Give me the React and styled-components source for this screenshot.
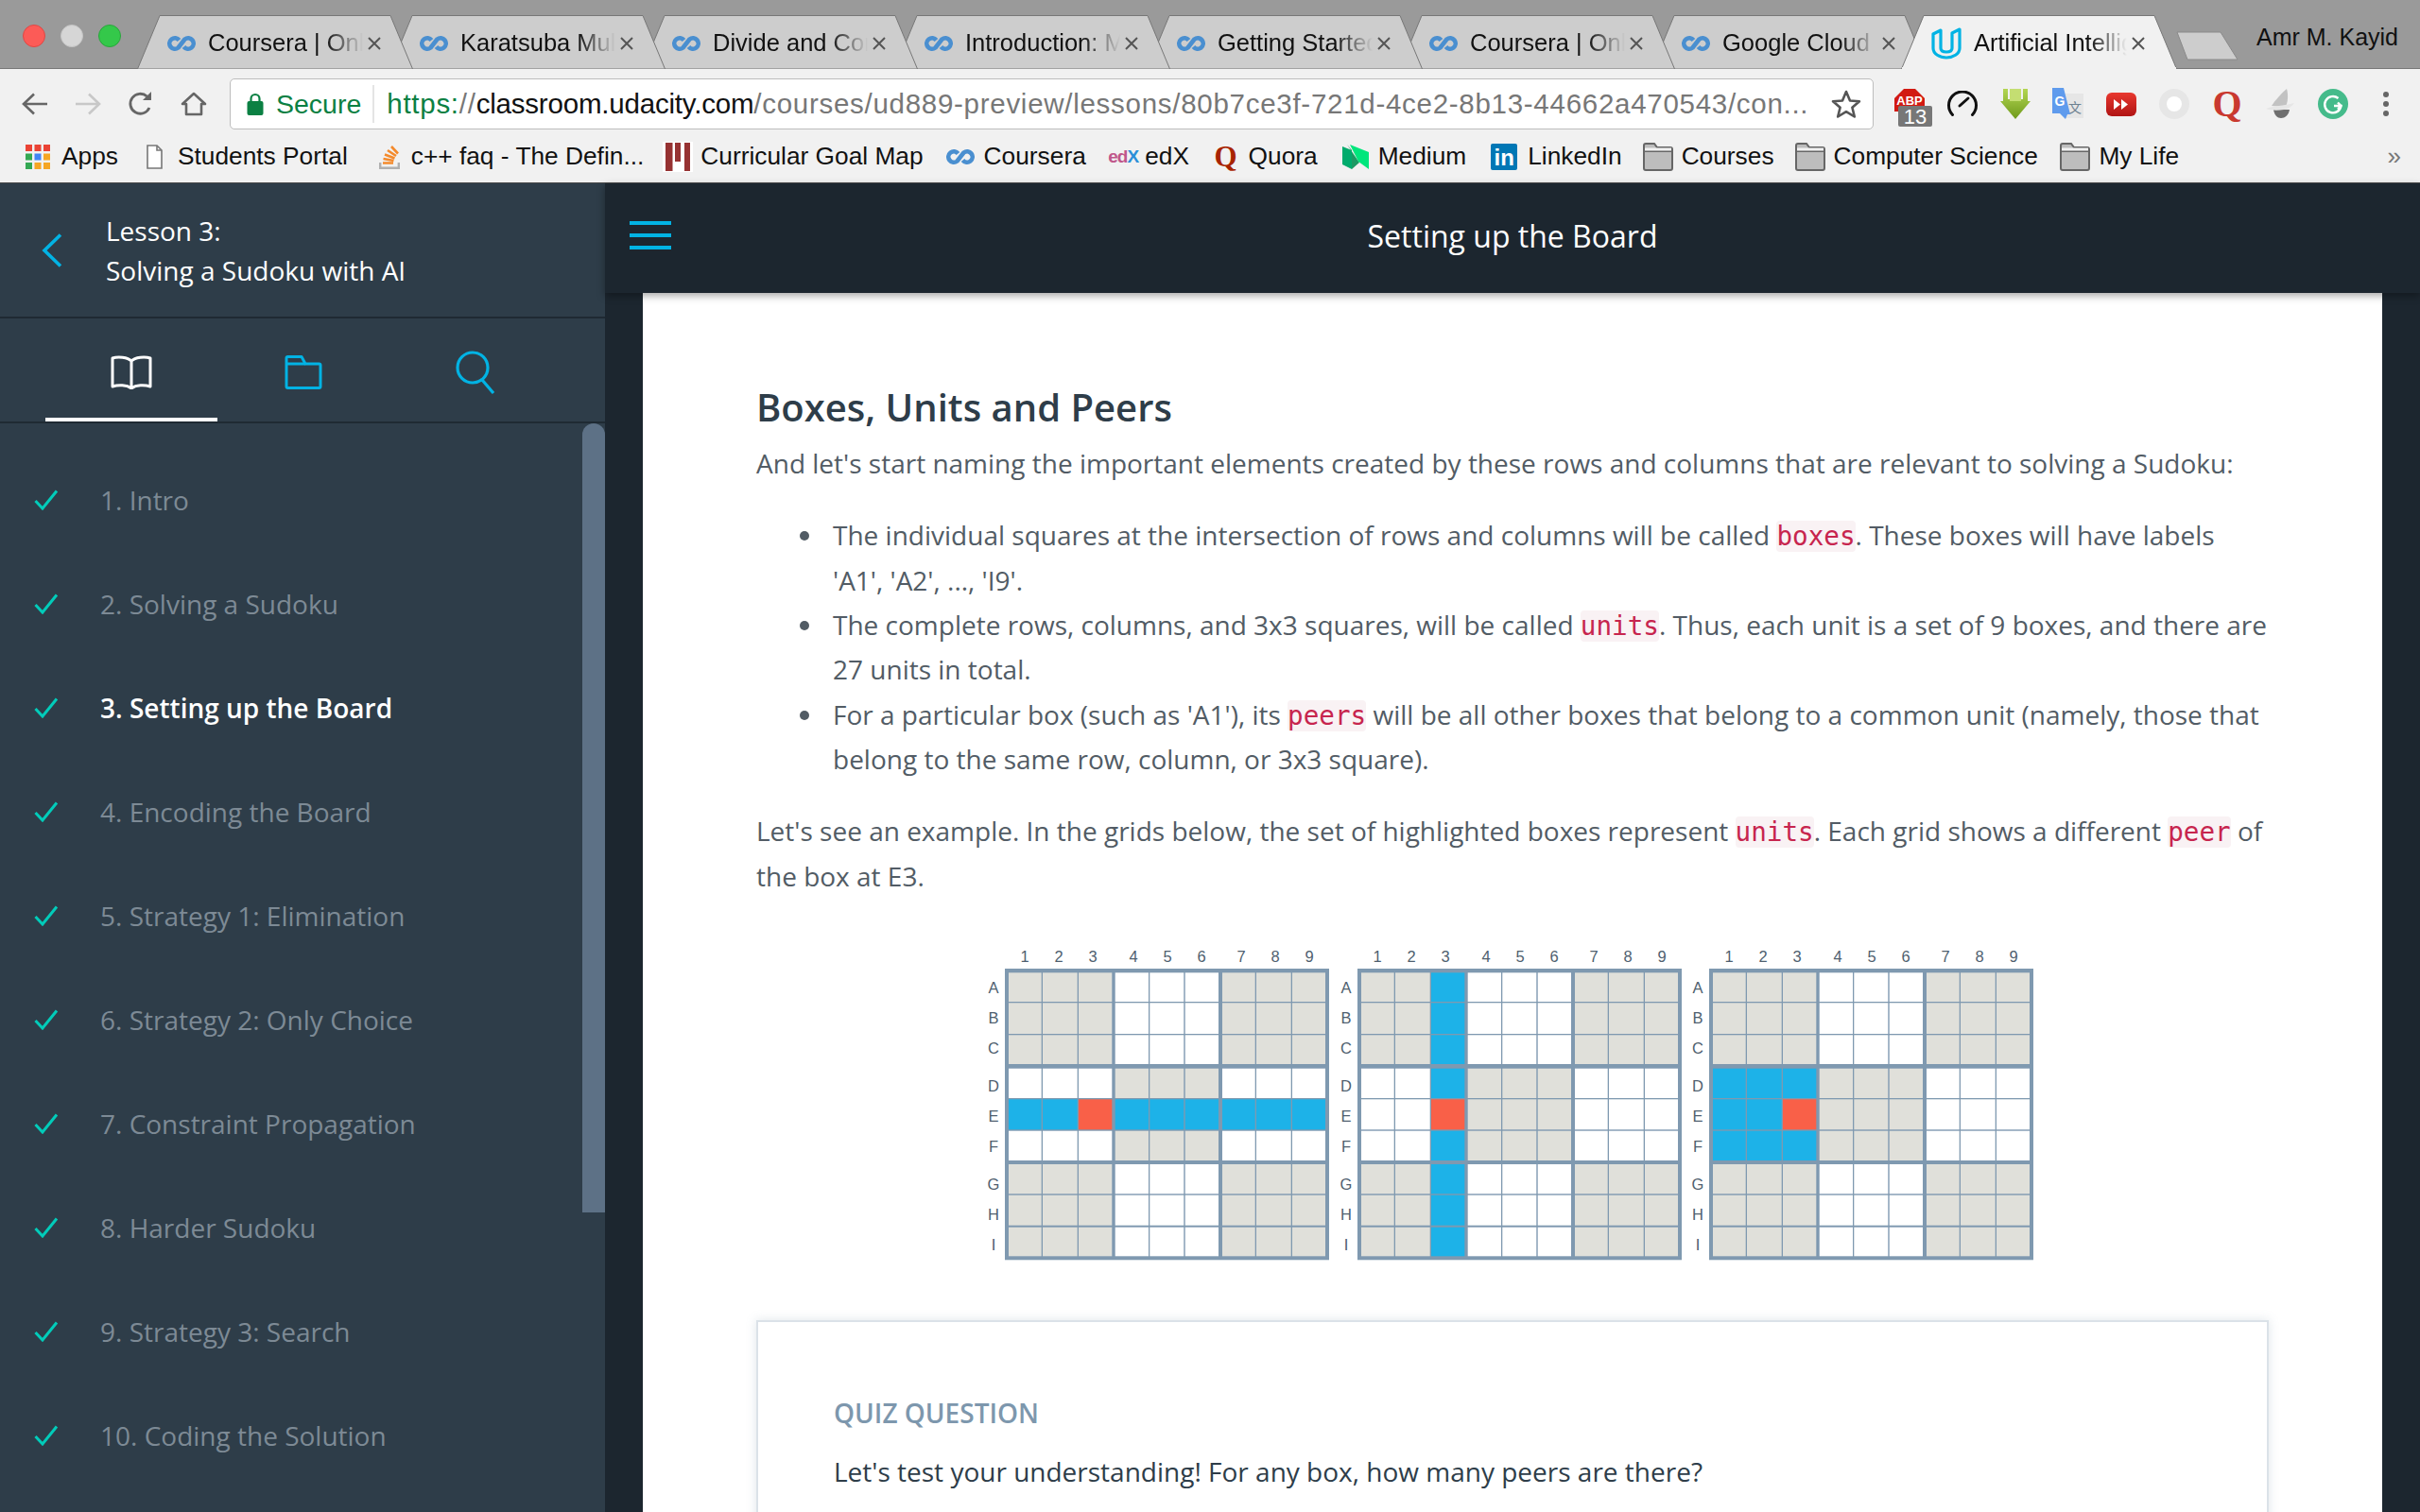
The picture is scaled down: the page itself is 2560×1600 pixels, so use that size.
import React from 'react'
import styled, { createGlobalStyle } from 'styled-components'

const GlobalStyle = createGlobalStyle`
  html, body {
    margin: 0;
    padding: 0;
    width: 2560px;
    height: 1600px;
    overflow: hidden;
    background: #1c262f;
  }
  * { box-sizing: border-box; }
`

const UI_FONT = '"Liberation Sans", Arial, sans-serif'
const PAGE_FONT = '"Open Sans", "Noto Sans", sans-serif'

const Page = styled.div`
  width: 2560px;
  height: 1600px;
  display: flex;
  flex-direction: column;
  overflow: hidden;
  font-family: ${PAGE_FONT};
`

/* browser chrome */

const TabStrip = styled.div`
  height: 73px;
  flex: none;
  display: flex;
  align-items: flex-end;
  padding-left: 24px;
  background: #9a9a9a;
  border-bottom: 1px solid #777;
  font-family: ${UI_FONT};
`

const Lights = styled.div`
  display: flex;
  gap: 16px;
  align-self: flex-start;
  margin: 26px 17px 0 0;
`

const Light = styled.span`
  width: 24px;
  height: 24px;
  border-radius: 50%;
  background: ${p => p.color};
  border: 1px solid ${p => p.edge};
`

const TabRow = styled.div`
  display: flex;
  height: 57px;
  margin-bottom: -1px;
`

const TabItem = styled.div`
  position: relative;
  z-index: ${p => p.$order};
  width: 292px;
  height: 57px;
  margin-right: -25px;
  margin-left: ${p => (p.$active ? -3 : 0)}px;
  padding: 2px 32px 0 32px;
  display: flex;
  align-items: center;
  gap: 13px;
  font-size: 25.5px;
  color: #111;
`

const TabShape = styled.svg`
  position: absolute;
  left: 0;
  top: 0;
  z-index: -1;
`

const TabTitle = styled.span`
  flex: 1;
  min-width: 0;
  overflow: hidden;
  white-space: nowrap;
  -webkit-mask-image: linear-gradient(to right, #000 76%, transparent 100%);
  mask-image: linear-gradient(to right, #000 76%, transparent 100%);
`

const TabClose = styled.svg`
  flex: none;
  margin-left: -10px;
`

const NewTab = styled.svg`
  flex: none;
  position: relative;
  z-index: 0;
  align-self: flex-start;
  margin: 33px 0 0 24px;
`

const UserName = styled.div`
  margin-left: auto;
  align-self: flex-start;
  padding: 23px 23px 0 0;
  font-size: 25px;
  line-height: 32px;
  color: #111;
`

const Toolbar = styled.div`
  height: 65px;
  flex: none;
  display: flex;
  align-items: flex-start;
  padding: 10px 0 0 22px;
  background: #f1f1f1;
  font-family: ${UI_FONT};
`

const NavButton = styled.div`
  width: 56px;
  height: 54px;
  display: flex;
  align-items: center;
  padding-left: 1px;
`

const Omnibox = styled.div`
  width: 1739px;
  height: 54px;
  margin-left: -3px;
  display: flex;
  align-items: center;
  background: #fff;
  border: 1px solid #bdbdbd;
  border-radius: 5px;
  padding-left: 17px;
  font-size: 28.5px;
`

const Secure = styled.span`
  color: #0b8043;
  margin-left: 13px;
  padding-right: 12px;
  margin-right: 13px;
  line-height: 40px;
  border-right: 2px solid #e4e4e4;
`

const Url = styled.span`
  flex: 1;
  min-width: 0;
  white-space: nowrap;
  overflow: hidden;
  color: #777;
  font-size: 29.5px;
  letter-spacing: 0.72px;
`

const UrlScheme = styled.span`
  color: #0b8043;
`

const UrlHost = styled.span`
  color: #111;
  letter-spacing: -0.2px;
`

const Star = styled.svg`
  flex: none;
  margin: 0 12px 0 10px;
`

const Extensions = styled.div`
  display: flex;
  margin-left: 10px;
`

const Extension = styled.div`
  position: relative;
  width: 56px;
  height: 54px;
  display: flex;
  align-items: center;
  justify-content: center;
`

const AbpShield = styled.svg`
  position: absolute;
  left: 12px;
  top: 11px;
`

const AbpCount = styled.span`
  position: absolute;
  left: 16px;
  top: 29px;
  width: 36px;
  height: 22px;
  background: #777;
  color: #fff;
  font-size: 22px;
  line-height: 23px;
  text-align: center;
  border-radius: 2px;
`

const QuoraExt = styled.span`
  color: #c9392f;
  font: bold 40px/1 "Liberation Serif", serif;
`

const Bookmarks = styled.div`
  height: 56px;
  flex: none;
  display: flex;
  align-items: center;
  padding-left: ${p => p.$start}px;
  background: #f1f1f1;
  border-bottom: 1px solid #4a4a4a;
  font-family: ${UI_FONT};
  font-size: 26.3px;
  color: #111;
`

const Bookmark = styled.div`
  display: flex;
  align-items: center;
  gap: ${p => p.$gap}px;
  margin-right: ${p => p.$after}px;
  white-space: nowrap;
`

const Overflow = styled.span`
  margin-left: auto;
  padding-right: 20px;
  color: #777;
  font-size: 26px;
`

const QuoraMark = styled.span`
  color: #a82400;
  font: bold 31px/1 "Liberation Serif", serif;
`

const LinkedInMark = styled.span`
  width: 28px;
  height: 28px;
  border-radius: 2px;
  background: #0077b5;
  color: #fff;
  font: bold 24px/30px "Liberation Sans", sans-serif;
  text-align: center;
`

const EdxMark = styled.span`
  font: bold 19px/1 "Liberation Sans", sans-serif;
  letter-spacing: -1px;
  color: #c0578b;
`

const EdxX = styled.span`
  color: #2a8fd8;
`

/* classroom */

const Classroom = styled.div`
  flex: 1;
  min-height: 0;
  display: flex;
`

const Sidebar = styled.aside`
  width: 640px;
  flex: none;
  display: flex;
  flex-direction: column;
  background: #2e3d49;
`

const SideHeader = styled.div`
  height: 143px;
  flex: none;
  display: flex;
  align-items: center;
  gap: 46px;
  padding: 0 0 0 44px;
  border-bottom: 2px solid #1f2a33;
`

const LessonName = styled.div`
  color: #fff;
  font-size: 28px;
  line-height: 42px;
`

const SideTabs = styled.div`
  height: 111px;
  flex: none;
  display: flex;
  padding-left: 48px;
  border-bottom: 2px solid #1f2a33;
`

const SideTab = styled.div`
  width: 182px;
  display: flex;
  align-items: center;
  justify-content: center;
  padding-top: 9px;
  border-bottom: 4px solid ${p => (p.$active ? '#fff' : 'transparent')};
`

const LessonList = styled.ul`
  position: relative;
  flex: 1;
  list-style: none;
  margin: 0;
  padding: 26px 0 0;
  overflow: hidden;
`

const Scrollbar = styled.div`
  position: absolute;
  right: 0;
  top: 0;
  width: 24px;
  height: 835px;
  border-radius: 12px 12px 0 0;
  background: #5d7186;
`

const LessonItem = styled.li`
  height: 110px;
  display: flex;
  align-items: center;
  gap: 44px;
  padding-left: 36px;
  font-size: 28px;
  font-weight: ${p => (p.$active ? 600 : 400)};
  color: ${p => (p.$active ? '#fff' : '#7d8a95')};
`

const Main = styled.main`
  flex: 1;
  min-width: 0;
  display: flex;
  flex-direction: column;
  background: #1c262f;
`

const TopBar = styled.header`
  position: relative;
  z-index: 2;
  height: 116px;
  flex: none;
  display: flex;
  align-items: center;
  justify-content: center;
  padding-bottom: 6px;
  background: #1c262f;
  box-shadow: 0 3px 8px rgba(0, 0, 0, 0.35);
  color: #fff;
  font-size: 32px;
`

const Hamburger = styled.div`
  position: absolute;
  left: 26px;
  top: 40px;
  width: 44px;
  height: 30px;
  border-top: 4px solid #02b3e4;
  border-bottom: 4px solid #02b3e4;

  &::after {
    content: '';
    display: block;
    margin-top: 9px;
    height: 4px;
    background: #02b3e4;
  }
`

const Article = styled.article`
  flex: 1;
  min-height: 0;
  margin: 0 40px;
  padding: 91px 120px 0;
  background: #fff;
  overflow: hidden;
  color: #525c65;
  font-size: 28px;
  line-height: 47.35px;
`

const Heading = styled.h2`
  margin: 0 0 6px;
  font-size: 40px;
  line-height: 60px;
  font-weight: 600;
  color: #2e3d49;
`

const Para = styled.p`
  margin: 0;
`

const Bullets = styled.ul`
  margin: 29px 0;
  padding-left: 81px;
  list-style: none;
`

const Bullet = styled.li`
  position: relative;

  &::before {
    content: '';
    position: absolute;
    left: -35px;
    top: 19px;
    width: 10px;
    height: 10px;
    border-radius: 50%;
    background: #525c65;
  }
`

const Code = styled.code`
  font-family: "DejaVu Sans Mono", monospace;
  font-size: 27.6px;
  line-height: 1;
  color: #c7254e;
  background: #f9f2f4;
  border-radius: 4px;
`

const Figure = styled.div`
  display: flex;
  justify-content: center;
  margin: 39px 0 57px;
`

const QuizCard = styled.section`
  height: 400px;
  padding: 76px 80px 0;
  background: #fff;
  border: 2px solid #dbe2e8;
  box-shadow: 0 0 10px rgba(125, 151, 173, 0.25);
`

const QuizLabel = styled.div`
  font-size: 28px;
  line-height: 40px;
  font-weight: 600;
  color: #7d97ad;
`

const QuizText = styled.div`
  margin-top: 22px;
  font-size: 28px;
  line-height: 40px;
  color: #2e3d49;
`

/* drawn parts */

const CourseraIcon = () => (
  <svg width="30" height="18" viewBox="0 0 30 18" fill="none" stroke="#4a8fd0" strokeWidth="4.6">
    <path d="M12.5 5.5A5.7 5.7 0 1 0 11.5 13.5L18.5 4.5A5.7 5.7 0 1 1 17.5 12.5" />
  </svg>
)

const UdacityIcon = () => (
  <svg width="32" height="34" viewBox="0 0 32 34" fill="none" stroke="#02b3e4" strokeWidth="3.2" strokeLinejoin="round">
    <path d="M2 7V22C2 28 9 32 16 32S30 28 30 22V2L22 6V22C22 25 19 26 16 26S10 25 10 22V3Z" />
  </svg>
)

const Tab = ({ title, order, active }) => {
  const fill = active ? '#f1f1f1' : '#cdcdcd'
  return (
    <TabItem $order={order} $active={active}>
      <TabShape width="292" height="57" viewBox="0 0 292 57">
        <polygon points="0.5,57 24,0.5 268,0.5 291.5,57" fill={fill} stroke="#777" strokeWidth="1" />
        {active && <rect x="1" y="55" width="290" height="2" fill={fill} />}
      </TabShape>
      {active ? <UdacityIcon /> : <CourseraIcon />}
      <TabTitle>{title}</TabTitle>
      <TabClose width="18" height="18" viewBox="0 0 18 18" stroke="#555" strokeWidth="2">
        <path d="M3 3L15 15M15 3L3 15" />
      </TabClose>
    </TabItem>
  )
}

const Arrow = ({ flip, color }) => (
  <svg width="28" height="24" viewBox="0 0 28 24" fill="none" stroke={color} strokeWidth="2.6" style={flip ? { transform: 'scaleX(-1)' } : undefined}>
    <path d="M27 12H2M13 1.5L2 12L13 22.5" />
  </svg>
)

const Reload = () => (
  <svg width="28" height="28" viewBox="0 0 28 28" fill="none" stroke="#666" strokeWidth="2.8">
    <path d="M23 18A10.5 10.5 0 1 1 20.5 6" />
    <path d="M25 1V10H16Z" fill="#666" stroke="none" />
  </svg>
)

const HomeIcon = () => (
  <svg width="28" height="26" viewBox="0 0 28 26" fill="none" stroke="#666" strokeWidth="2.6" strokeLinejoin="round">
    <path d="M2 13L14 2L26 13H22V24H6V13Z" />
  </svg>
)

const Lock = () => (
  <svg width="18" height="24" viewBox="0 0 18 24">
    <path d="M4.5 10V6.5a4.5 4.5 0 0 1 9 0V10" fill="none" stroke="#0b8043" strokeWidth="2.2" />
    <rect x="0.5" y="9" width="17" height="15" rx="2" fill="#0b8043" />
  </svg>
)

const ExtAbp = () => (
  <Extension>
    <AbpShield width="32" height="24" viewBox="0 0 32 24">
      <polygon points="10,0 22,0 32,10 32,24 0,24 0,10" fill="#d21a12" />
      <text x="16" y="17" textAnchor="middle" fontSize="13" fontWeight="700" fontFamily="Liberation Sans" fill="#fff">ABP</text>
    </AbpShield>
    <AbpCount>13</AbpCount>
  </Extension>
)

const ExtSpeed = () => (
  <Extension>
    <svg width="34" height="28" viewBox="0 0 34 28" fill="none" stroke="#111" strokeWidth="3" strokeLinecap="round">
      <path d="M6.5 25.5A14.5 14.5 0 1 1 27.5 25.5" />
      <path d="M14 16L23 8" />
    </svg>
  </Extension>
)

const ExtDownload = () => (
  <Extension>
    <svg width="32" height="32" viewBox="0 0 32 32">
      <defs>
        <linearGradient id="dlHead" x1="0" y1="0" x2="0" y2="1">
          <stop offset="0" stopColor="#b3d652" />
          <stop offset="1" stopColor="#6f9a1b" />
        </linearGradient>
      </defs>
      <polygon points="3,0 8,0 8,11 24,11 24,0 29,0 29,13 32,13 16,32 0,13 3,13" fill="url(#dlHead)" />
      <polygon points="10,0 22,0 22,13 10,13" fill="#c4de72" />
    </svg>
  </Extension>
)

const ExtTranslate = () => (
  <Extension>
    <svg width="34" height="34" viewBox="0 0 34 34">
      <rect x="13" y="6" width="20" height="26" fill="#e6e6e6" />
      <text x="24" y="26" textAnchor="middle" fontSize="14" fontFamily="Noto Sans CJK SC" fill="#6d8190">文</text>
      <polygon points="0,0 12,0 19,28 16,28 14,33 8,27 0,27" fill="#5f9bed" />
      <text x="8" y="19" textAnchor="middle" fontSize="14" fontWeight="700" fontFamily="Liberation Sans" fill="#fff">G</text>
    </svg>
  </Extension>
)

const ExtYoutube = () => (
  <Extension>
    <svg width="32" height="25" viewBox="0 0 32 25">
      <defs>
        <linearGradient id="ytFill" x1="0" y1="0" x2="0" y2="1">
          <stop offset="0" stopColor="#e8382f" />
          <stop offset="1" stopColor="#b01414" />
        </linearGradient>
      </defs>
      <rect width="32" height="25" rx="6" fill="url(#ytFill)" />
      <polygon points="8,7 15,12.5 8,18" fill="#fff" />
      <polygon points="16,7 23,12.5 16,18" fill="#fff" />
    </svg>
  </Extension>
)

const ExtRing = () => (
  <Extension>
    <svg width="32" height="32" viewBox="0 0 32 32">
      <circle cx="16" cy="16" r="16" fill="#e6e6e6" />
      <circle cx="16" cy="16" r="8" fill="#fff" />
    </svg>
  </Extension>
)

const ExtWing = () => (
  <Extension>
    <svg width="32" height="32" viewBox="0 0 32 32">
      <path d="M23 0C25 7 24 14 22 19L7 18C11 12 17 5 23 0Z" fill="#c2c2c2" />
      <path d="M9 22H26C25 28 21 31 17 31S10 28 9 22Z" fill="#6f6f6f" />
      <path d="M1 21C8 18 20 18 31 15C28 19 24 22 20 22C14 23 6 23 1 21Z" fill="#e6e6e6" />
    </svg>
  </Extension>
)

const ExtGrammarly = () => (
  <Extension>
    <svg width="32" height="32" viewBox="0 0 32 32" fill="none">
      <circle cx="16" cy="16" r="16" fill="#45bb8b" />
      <path d="M21.5 10A8.7 8.7 0 1 0 24.5 18H17M21 14.5L24.5 18L21 21.5" stroke="#fff" strokeWidth="2.4" />
    </svg>
  </Extension>
)

const ExtMenu = () => (
  <Extension>
    <svg width="6" height="26" viewBox="0 0 6 26" fill="#666">
      <circle cx="3" cy="3" r="3" />
      <circle cx="3" cy="13" r="3" />
      <circle cx="3" cy="23" r="3" />
    </svg>
  </Extension>
)

const AppsIcon = () => {
  const colors = ['#ea4335', '#ea4335', '#ea4335', '#34a853', '#4285f4', '#f5a623', '#34a853', '#f5a623', '#f5a623']
  return (
    <svg width="26" height="26" viewBox="0 0 26 26">
      {colors.map((c, i) => (
        <rect key={i} x={(i % 3) * 9.5} y={Math.floor(i / 3) * 9.5} width="7" height="7" fill={c} />
      ))}
    </svg>
  )
}

const DocIcon = () => (
  <svg width="17" height="26" viewBox="0 0 17 26" fill="#fff" stroke="#777" strokeWidth="1.6">
    <path d="M1 1H11L16 6V25H1Z" />
    <path d="M11 1V6H16" fill="none" />
  </svg>
)

const StackIcon = () => (
  <svg width="22" height="26" viewBox="0 0 22 26" fill="none">
    <path d="M1.2 19V24.8H20.8V19" stroke="#b0b0b0" strokeWidth="2.4" />
    <path d="M4 19.5H15M4.5 15L15.5 17M6 10.5L16.5 14.5M9 6L18 12M13 2L20 9.5" stroke="#f48a2c" strokeWidth="2.6" />
  </svg>
)

const CurricularIcon = () => (
  <svg width="32" height="32" viewBox="0 0 32 32">
    <rect width="32" height="32" fill="#fff" />
    <rect x="3" y="1" width="7.5" height="30" fill="#963232" />
    <rect x="13" y="1" width="6" height="20" fill="#963232" />
    <rect x="23" y="1" width="6" height="30" fill="#963232" />
  </svg>
)

const MediumIcon = () => (
  <svg width="28" height="26" viewBox="0 0 28 26">
    <polygon points="0,2 10,6 10,26 0,21" fill="#00ab6c" />
    <polygon points="5,0 18,19 10,26 10,6" fill="#1c9963" />
    <polygon points="8,0 28,8 28,26 17,18" fill="#00e67c" />
  </svg>
)

const FolderIcon = () => (
  <svg width="32" height="30" viewBox="0 0 32 30">
    <path d="M1 3a2 2 0 0 1 2-2H12L15 5H29a2 2 0 0 1 2 2V27a2 2 0 0 1-2 2H3a2 2 0 0 1-2-2Z" fill="#bdbdbd" stroke="#666" strokeWidth="2" />
    <path d="M1 9H31" stroke="#666" strokeWidth="2" />
    <rect x="2" y="5.5" width="28" height="3" fill="#f1f1f1" />
  </svg>
)

const Chevron = () => (
  <svg width="22" height="36" viewBox="0 0 22 36" fill="none" stroke="#02b3e4" strokeWidth="3.6">
    <path d="M20 1.5L3 18L20 34.5" />
  </svg>
)

const BookIcon = () => (
  <svg width="44" height="36" viewBox="0 0 44 36" fill="none" stroke="#fff" strokeWidth="3" strokeLinejoin="round">
    <path d="M22 6C18 2 8 1 2 3V33C8 31 17 31 22 35C27 31 36 31 42 33V3C36 1 26 2 22 6V35" />
  </svg>
)

const SideFolderIcon = () => (
  <svg width="40" height="36" viewBox="0 0 40 36" fill="none" stroke="#02b3e4" strokeWidth="3" strokeLinejoin="round">
    <path d="M2 3a1.5 1.5 0 0 1 1.5-1.5H18L22 9H36.5A1.5 1.5 0 0 1 38 10.5V33A1.5 1.5 0 0 1 36.5 34.5H3.5A1.5 1.5 0 0 1 2 33Z" />
    <path d="M2 9H22" />
  </svg>
)

const SearchIcon = () => (
  <svg width="42" height="46" viewBox="0 0 42 46" fill="none" stroke="#02b3e4" strokeWidth="3.2">
    <circle cx="18" cy="18" r="16" />
    <path d="M28 31L40 45" />
  </svg>
)

const Check = () => (
  <svg width="26" height="22" viewBox="0 0 26 22" fill="none" stroke="#02ccba" strokeWidth="3">
    <path d="M1.5 12L9 20L24 1.5" />
  </svg>
)

/* sudoku figure */

const COL_START = [4, 40, 78, 116.7, 153.3, 190.7, 230, 266, 304]
const COL_END = [38.7, 76.7, 113.3, 152, 189.3, 226, 264.7, 302.7, 339]
const ROW_START = [4.3, 36.3, 70.3, 105.7, 138.3, 171.7, 207, 239.7, 273.7]
const ROW_END = [35, 69, 101, 137, 170.3, 203, 238.3, 271.7, 304.3]
const COL_LABEL = [21, 57, 93, 136, 172, 208, 250, 286, 322]
const ROW_LABEL = [20, 52, 84, 124, 156, 188, 228, 260, 292]
const ROW_NAMES = 'ABCDEFGHI'

const inRow = (r, c) => r === 4
const inCol = (r, c) => c === 2
const inBox = (r, c) => r >= 3 && r <= 5 && c <= 2

const cellFill = (r, c, unit) => {
  if (r === 4 && c === 2) return '#f96048'
  if (unit(r, c)) return '#1db2e8'
  return (Math.floor(r / 3) + Math.floor(c / 3)) % 2 === 0 ? '#e0e0da' : '#fff'
}

const SudokuGrid = ({ x, unit }) => (
  <g transform={`translate(${x} 35)`}>
    <rect width="343" height="308.3" fill="#7f99b0" />
    {ROW_START.map((top, r) =>
      COL_START.map((left, c) => (
        <rect key={`${r}-${c}`} x={left} y={top} width={COL_END[c] - left} height={ROW_END[r] - top} fill={cellFill(r, c, unit)} />
      ))
    )}
    {COL_LABEL.map((cx, i) => (
      <text key={i} x={cx} y="-7.5" textAnchor="middle">{i + 1}</text>
    ))}
    {ROW_LABEL.map((cy, i) => (
      <text key={i} x="-12" y={cy + 6} textAnchor="middle">{ROW_NAMES[i]}</text>
    ))}
  </g>
)

const SudokuFigure = () => (
  <svg width="1120" height="350" viewBox="0 0 1120 350" fontFamily="Liberation Sans, sans-serif" fontSize="16.5" fill="#4f5f6f">
    <SudokuGrid x={23} unit={inRow} />
    <SudokuGrid x={396} unit={inCol} />
    <SudokuGrid x={768} unit={inBox} />
  </svg>
)

const tabs = [
  'Coursera | Online Courses',
  'Karatsuba Multiplication',
  'Divide and Conquer',
  'Introduction: Merge Sort',
  'Getting Started with',
  'Coursera | Online Courses',
  'Google Cloud Platform',
]

const lessons = [
  '1. Intro',
  '2. Solving a Sudoku',
  '3. Setting up the Board',
  '4. Encoding the Board',
  '5. Strategy 1: Elimination',
  '6. Strategy 2: Only Choice',
  '7. Constraint Propagation',
  '8. Harder Sudoku',
  '9. Strategy 3: Search',
  '10. Coding the Solution',
]

export default function App() {
  return (
    <Page>
      <GlobalStyle />
      <TabStrip>
        <Lights>
          <Light color="#fc5b57" edge="#df4744" />
          <Light color="#d6d6d6" edge="#c4c4c4" />
          <Light color="#34c84a" edge="#2aa53c" />
        </Lights>
        <TabRow>
          {tabs.map((t, i) => (
            <Tab key={i} title={t} order={20 - i} />
          ))}
          <Tab title="Artificial Intelligence" order={30} active />
        </TabRow>
        <NewTab width="66" height="31" viewBox="0 0 66 31">
          <polygon points="1,1 47,1 65,30 12,30" fill="#cdcdcd" stroke="#8a8a8a" strokeWidth="1" strokeLinejoin="round" />
        </NewTab>
        <UserName>Amr M. Kayid</UserName>
      </TabStrip>

      <Toolbar>
        <NavButton><Arrow color="#666" /></NavButton>
        <NavButton><Arrow color="#c8c8c8" flip /></NavButton>
        <NavButton><Reload /></NavButton>
        <NavButton><HomeIcon /></NavButton>
        <Omnibox>
          <Lock />
          <Secure>Secure</Secure>
          <Url>
            <UrlScheme>https:</UrlScheme>//<UrlHost>classroom.udacity.com</UrlHost>/courses/ud889-preview/lessons/80b7ce3f-721d-4ce2-8b13-44662a470543/con...
          </Url>
          <Star width="32" height="32" viewBox="0 0 32 32" fill="none" stroke="#555" strokeWidth="2.6" strokeLinejoin="round">
            <polygon points="16,3 20,12.5 30,13.2 22.4,19.8 24.8,29.5 16,24.2 7.2,29.5 9.6,19.8 2,13.2 12,12.5" />
          </Star>
        </Omnibox>
        <Extensions>
          <ExtAbp />
          <ExtSpeed />
          <ExtDownload />
          <ExtTranslate />
          <ExtYoutube />
          <ExtRing />
          <Extension><QuoraExt>Q</QuoraExt></Extension>
          <ExtWing />
          <ExtGrammarly />
          <ExtMenu />
        </Extensions>
      </Toolbar>

      <Bookmarks $start={27}>
        <Bookmark $gap={12} $after={30}><AppsIcon />Apps</Bookmark>
        <Bookmark $gap={16} $after={33}><DocIcon />Students Portal</Bookmark>
        <Bookmark $gap={12} $after={20}><StackIcon />c++ faq - The Defin...</Bookmark>
        <Bookmark $gap={8} $after={24}><CurricularIcon />Curricular Goal Map</Bookmark>
        <Bookmark $gap={10} $after={23.5}><CourseraIcon />Coursera</Bookmark>
        <Bookmark $gap={7} $after={26.5}><EdxMark>ed<EdxX>X</EdxX></EdxMark>edX</Bookmark>
        <Bookmark $gap={12} $after={26}><QuoraMark>Q</QuoraMark>Quora</Bookmark>
        <Bookmark $gap={10} $after={26}><MediumIcon />Medium</Bookmark>
        <Bookmark $gap={11} $after={22}><LinkedInMark>in</LinkedInMark>LinkedIn</Bookmark>
        <Bookmark $gap={9} $after={22}><FolderIcon />Courses</Bookmark>
        <Bookmark $gap={9} $after={23.5}><FolderIcon />Computer Science</Bookmark>
        <Bookmark $gap={9} $after={0}><FolderIcon />My Life</Bookmark>
        <Overflow>»</Overflow>
      </Bookmarks>

      <Classroom>
        <Sidebar>
          <SideHeader>
            <Chevron />
            <LessonName>
              Lesson 3:
              <br />
              Solving a Sudoku with AI
            </LessonName>
          </SideHeader>
          <SideTabs>
            <SideTab $active><BookIcon /></SideTab>
            <SideTab><SideFolderIcon /></SideTab>
            <SideTab><SearchIcon /></SideTab>
          </SideTabs>
          <LessonList>
            <Scrollbar />
            {lessons.map((l, i) => (
              <LessonItem key={l} $active={i === 2}>
                <Check />
                {l}
              </LessonItem>
            ))}
          </LessonList>
        </Sidebar>

        <Main>
          <TopBar>
            <Hamburger />
            Setting up the Board
          </TopBar>
          <Article>
            <Heading>Boxes, Units and Peers</Heading>
            <Para>And let's start naming the important elements created by these rows and columns that are relevant to solving a Sudoku:</Para>
            <Bullets>
              <Bullet>The individual squares at the intersection of rows and columns will be called <Code>boxes</Code>. These boxes will have labels 'A1', 'A2', ..., 'I9'.</Bullet>
              <Bullet>The complete rows, columns, and 3x3 squares, will be called <Code>units</Code>. Thus, each unit is a set of 9 boxes, and there are 27 units in total.</Bullet>
              <Bullet>For a particular box (such as 'A1'), its <Code>peers</Code> will be all other boxes that belong to a common unit (namely, those that belong to the same row, column, or 3x3 square).</Bullet>
            </Bullets>
            <Para>Let's see an example. In the grids below, the set of highlighted boxes represent <Code>units</Code>. Each grid shows a different <Code>peer</Code> of the box at E3.</Para>
            <Figure><SudokuFigure /></Figure>
            <QuizCard>
              <QuizLabel>QUIZ QUESTION</QuizLabel>
              <QuizText>Let's test your understanding! For any box, how many peers are there?</QuizText>
            </QuizCard>
          </Article>
        </Main>
      </Classroom>
    </Page>
  )
}
